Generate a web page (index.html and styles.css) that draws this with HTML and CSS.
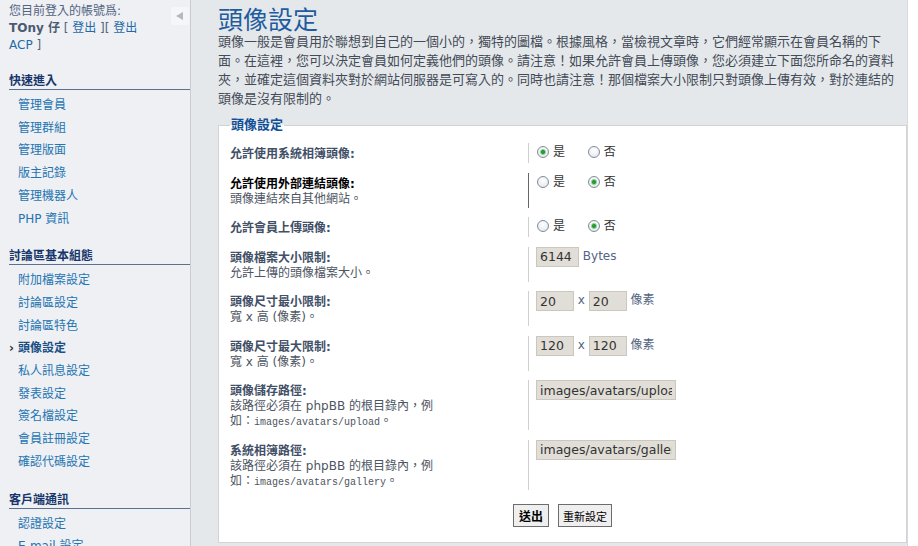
FILE: index.html
```html
<!DOCTYPE html>
<html lang="zh-Hant">

<head>
    <meta charset="UTF-8">
    <meta name="viewport" content="width=device-width, initial-scale=1.0">
    <title>頭像設定</title>
    <link rel="stylesheet" href="styles.css">
</head>

<body>
    <div class="page">

        <!-- left menu -->

        <aside class="side">
            <a class="toggle" href="#">
                <svg width="18" height="18" viewBox="0 0 18 18"><path d="M5 9 L12 5 L12 13 Z" fill="#b4b9c0"/></svg>
            </a>
            <div class="user">
                您目前登入的帳號爲:<br>
                <b>TOny 仔</b> [ <a href="#">登出</a> ][ <a href="#">登出 ACP</a> ]
            </div>

            <h3>快速進入</h3>
            <ul>
                <li><a href="#">管理會員</a></li>
                <li><a href="#">管理群組</a></li>
                <li><a href="#">管理版面</a></li>
                <li><a href="#">版主記錄</a></li>
                <li><a href="#">管理機器人</a></li>
                <li><a href="#">PHP 資訊</a></li>
            </ul>

            <h3>討論區基本組態</h3>
            <ul>
                <li><a href="#">附加檔案設定</a></li>
                <li><a href="#">討論區設定</a></li>
                <li><a href="#">討論區特色</a></li>
                <li class="active"><a href="#">頭像設定</a></li>
                <li><a href="#">私人訊息設定</a></li>
                <li><a href="#">發表設定</a></li>
                <li><a href="#">簽名檔設定</a></li>
                <li><a href="#">會員註冊設定</a></li>
                <li><a href="#">確認代碼設定</a></li>
            </ul>

            <h3>客戶端通訊</h3>
            <ul>
                <li><a href="#">認證設定</a></li>
                <li><a href="#">E-mail 設定</a></li>
                <li><a href="#">Jabber 設定</a></li>
            </ul>
        </aside>

        <!-- settings -->

        <main class="main">
            <h1>頭像設定</h1>
            <p class="intro">頭像一般是會員用於聯想到自己的一個小的，獨特的圖檔。根據風格，當檢視文章時，它們經常顯示在會員名稱的下面。在這裡，您可以決定會員如何定義他們的頭像。請注意！如果允許會員上傳頭像，您必須建立下面您所命名的資料夾，並確定這個資料夾對於網站伺服器是可寫入的。同時也請注意！那個檔案大小限制只對頭像上傳有效，對於連結的頭像是沒有限制的。</p>

            <form>
                <fieldset>
                    <legend>頭像設定</legend>

                    <dl class="row">
                        <dt><label>允許使用系統相簿頭像:</label></dt>
                        <dd>
                            <label class="choice"><input class="radio" type="radio" name="gallery" checked> 是</label>
                            <label class="choice"><input class="radio" type="radio" name="gallery"> 否</label>
                        </dd>
                    </dl>

                    <dl class="row hot">
                        <dt><label>允許使用外部連結頭像:</label><span class="desc">頭像連結來自其他網站。</span></dt>
                        <dd>
                            <label class="choice"><input class="radio" type="radio" name="remote"> 是</label>
                            <label class="choice"><input class="radio" type="radio" name="remote" checked> 否</label>
                        </dd>
                    </dl>

                    <dl class="row">
                        <dt><label>允許會員上傳頭像:</label></dt>
                        <dd>
                            <label class="choice"><input class="radio" type="radio" name="upload"> 是</label>
                            <label class="choice"><input class="radio" type="radio" name="upload" checked> 否</label>
                        </dd>
                    </dl>

                    <dl class="row">
                        <dt><label>頭像檔案大小限制:</label><span class="desc">允許上傳的頭像檔案大小。</span></dt>
                        <dd><input class="text w-size" type="text" value="6144"> <span class="unit">Bytes</span></dd>
                    </dl>

                    <dl class="row">
                        <dt><label>頭像尺寸最小限制:</label><span class="desc">寬 x 高 (像素)。</span></dt>
                        <dd><input class="text w-dim" type="text" value="20"> <span class="unit">x</span> <input class="text w-dim" type="text" value="20"> <span class="unit">像素</span></dd>
                    </dl>

                    <dl class="row">
                        <dt><label>頭像尺寸最大限制:</label><span class="desc">寬 x 高 (像素)。</span></dt>
                        <dd><input class="text w-dim" type="text" value="120"> <span class="unit">x</span> <input class="text w-dim" type="text" value="120"> <span class="unit">像素</span></dd>
                    </dl>

                    <dl class="row">
                        <dt><label>頭像儲存路徑:</label><span class="desc">該路徑必須在 phpBB 的根目錄內，例如：<code>images/avatars/upload</code>。</span></dt>
                        <dd><input class="text w-path" type="text" value="images/avatars/upload"></dd>
                    </dl>

                    <dl class="row">
                        <dt><label>系統相簿路徑:</label><span class="desc">該路徑必須在 phpBB 的根目錄內，例如：<code>images/avatars/gallery</code>。</span></dt>
                        <dd><input class="text w-path" type="text" value="images/avatars/gallery"></dd>
                    </dl>

                    <p class="submit">
                        <button class="btn btn-main" type="submit">送出</button>
                        <button class="btn" type="reset">重新設定</button>
                    </p>
                </fieldset>
            </form>
        </main>
    </div>
</body>

</html>
```

FILE: styles.css
```css
* {
    margin: 0;
    padding: 0;
    box-sizing: border-box;
}

html,
body {
    height: 100%;
    overflow: hidden;
}

body {
    background-color: #ffffff;
    font-family: "DejaVu Sans", "Noto Sans CJK TC", sans-serif;
    font-size: 12px;
    color: #536482;
}

a {
    text-decoration: none;
}

.page {
    display: flex;
    width: 908px;
    min-height: 100%;
}

/* left menu */

.side {
    position: relative;
    flex: none;
    width: 191px;
    padding: 3px 0 0 9px;
    background-color: #eef0f3;
    border-right: 1px solid #c9cdd2;
}

.side .toggle {
    position: absolute;
    top: 7px;
    right: 1px;
    display: block;
    width: 18px;
    height: 18px;
    background-color: #f5f6f8;
}

.side .toggle svg {
    display: block;
}

.side .user {
    width: 150px;
    line-height: 17px;
    color: #536482;
}

.side .user b {
    color: #4a5a72;
}

.side .user a {
    color: #1f6aa8;
}

.side h3 {
    margin-top: 18px;
    font-size: 12px;
    line-height: 16px;
    color: #17366b;
    border-bottom: 1px solid #5a7190;
}

.side .user + h3 {
    margin-top: 19px;
}

.side ul {
    list-style: none;
    padding: 4px 0 0 9px;
}

.side li {
    line-height: 22.7px;
}

.side li a {
    color: #2474b2;
}

.side li.active a {
    font-weight: bold;
    color: #1a4f86;
}

.side li.active a::before {
    content: "›";
    display: inline-block;
    width: 9px;
    margin-left: -9px;
    color: #333;
    font-weight: bold;
}

/* settings */

.main {
    flex: 1;
    padding: 5px 0 0 27px;
    background-color: #e5e8eb;
    border-right: 1px solid #d6d9dd;
}

.main h1 {
    font-family: "Noto Sans CJK TC", sans-serif;
    font-size: 25px;
    line-height: 26px;
    font-weight: normal;
    color: #1f5c9f;
}

.main .intro {
    padding-right: 8px;
    font-family: "Noto Sans CJK TC", sans-serif;
    font-size: 13px;
    line-height: 19px;
    color: #434b57;
}

fieldset {
    margin-top: 10px;
    padding: 10px 11px;
    background-color: #ffffff;
    border: 1px solid #d3d3d3;
}

legend {
    padding: 0 1px;
    font-size: 13px;
    line-height: 16px;
    font-weight: bold;
    color: #115098;
}

.row {
    display: flex;
    align-items: flex-start;
    margin-bottom: 9.5px;
}

.row dt {
    flex: none;
    width: 299px;
    padding: 4px 0 1px;
    line-height: 15px;
    border-right: 1px solid #d0d0d0;
}

.row dt label {
    display: block;
    font-weight: bold;
    color: #425067;
}

.row dt .desc {
    display: block;
    max-width: 210px;
    color: #4d5562;
}

.row dt .desc code {
    font-family: "Liberation Mono", monospace;
    font-size: 10px;
    line-height: 10px;
}

.row.hot dt {
    border-right-color: #666666;
}

.row.hot dt label {
    color: #000000;
}

.row dd {
    padding-left: 7px;
    line-height: 18px;
}

.choice {
    display: inline-flex;
    align-items: center;
    gap: 4px;
    margin-right: 18px;
    color: #333333;
}

.radio {
    appearance: none;
    width: 12px;
    height: 12px;
    margin-left: 1px;
    border: 1px solid #7f8c9b;
    border-radius: 50%;
    background: radial-gradient(circle at 50% 35%, #ffffff, #dfe3e8);
}

.radio:checked {
    background:
        radial-gradient(circle, #2f9a3a 0 1.6px, #7fcf84 2.4px, transparent 3.4px),
        radial-gradient(circle at 50% 35%, #ffffff, #dfe3e8);
}

.text {
    height: 20px;
    padding: 0 3px;
    vertical-align: top;
    font-family: "DejaVu Sans", sans-serif;
    font-size: 12.5px;
    color: #333333;
    background-color: #e1ded7;
    border: 1px solid #cbc7bf;
}

.w-size {
    width: 43px;
}

.w-dim {
    width: 38px;
}

.w-path {
    width: 140px;
}

.unit {
    color: #536482;
}

.submit {
    display: flex;
    justify-content: center;
    gap: 9px;
    padding: 5px 0;
}

.btn {
    height: 23px;
    padding: 0 4px;
    font-family: "DejaVu Sans", "Noto Sans CJK TC", sans-serif;
    font-size: 11px;
    color: #000000;
    background-color: #efefef;
    border: 1px solid #6d6d6d;
    border-radius: 0;
}

.btn-main {
    padding: 0 5px;
    font-size: 12px;
    font-weight: bold;
}
```
